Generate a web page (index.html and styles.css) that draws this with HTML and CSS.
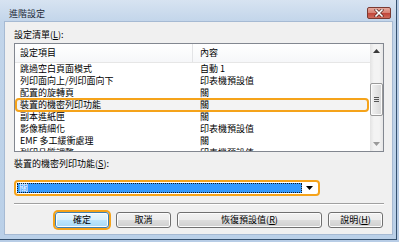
FILE: index.html
```html
<!DOCTYPE html>
<html>
<head>
<meta charset="utf-8">
<link rel="stylesheet" href="styles.css">
</head>
<body>
<div class="window">
  <div class="titlebar">
    <span class="title">進階設定</span>
    <span class="close"><svg width="10" height="8" viewBox="0 0 10 8"><path d="M2 1 L8 7 M8 1 L2 7" stroke="#5a2a24" stroke-width="3" stroke-linecap="square"/><path d="M2 1 L8 7 M8 1 L2 7" stroke="#fff" stroke-width="1.6" stroke-linecap="square"/></svg></span>
  </div>
  <div class="client">
    <div class="label">設定清單(<u>L</u>):</div>
    <div class="listbox">
      <div class="list">
        <div class="row head"><div class="c1">設定項目</div><div class="c2">內容</div></div>
        <div class="row"><div class="c1">跳過空白頁面模式</div><div class="c2">自動 1</div></div>
        <div class="row"><div class="c1">列印面向上/列印面向下</div><div class="c2">印表機預設值</div></div>
        <div class="row"><div class="c1">配置的旋轉頁</div><div class="c2">關</div></div>
        <div class="row sel"><div class="c1">裝置的機密列印功能</div><div class="c2">關</div></div>
        <div class="row"><div class="c1">副本進紙匣</div><div class="c2">關</div></div>
        <div class="row"><div class="c1">影像精細化</div><div class="c2">印表機預設值</div></div>
        <div class="row"><div class="c1">EMF 多工緩衝處理</div><div class="c2">關</div></div>
        <div class="row"><div class="c1">列印品質調整</div><div class="c2">印表機預設值</div></div>
      </div>
      <div class="scrollbar">
        <div class="arrow"><svg width="7" height="4" viewBox="0 0 7 4"><path d="M0 4 L3.5 0 L7 4 Z" fill="#3a3a3a"/></svg></div>
        <div class="track"><div class="thumb"><span class="grip"></span></div></div>
        <div class="arrow"><svg width="7" height="4" viewBox="0 0 7 4"><path d="M0 0 L3.5 4 L7 0 Z" fill="#9a9a9a"/></svg></div>
      </div>
    </div>
    <div class="label label2">裝置的機密列印功能(<u>S</u>):</div>
    <div class="combo">
      <div class="combo-val">關</div>
      <div class="combo-btn"><svg width="7" height="4" viewBox="0 0 7 4"><path d="M0 0 L3.5 4 L7 0 Z" fill="#000"/></svg></div>
    </div>
    <div class="sep"></div>
    <div class="buttons">
      <button class="btn default ok">確定</button>
      <button class="btn cancel">取消</button>
      <button class="btn reset">恢復預設值(<u>R</u>)</button>
      <button class="btn help">說明(<u>H</u>)</button>
    </div>
  </div>
</div>
</body>
</html>
```
FILE: styles.css
```css
body {
  margin: 0;
  background: #b8cde6;
  font-family: "Noto Sans CJK TC", "Noto Sans CJK SC", sans-serif;
  font-size: 9px;
  color: #000;
}
u { text-decoration: underline; text-underline-offset: 1px; }
.window {
  width: 396px;
  height: 239px;
  border-right: 1px solid #34506e;
  border-bottom: 1px solid #34506e;
  background: linear-gradient(#d7e3f1, #c2d5ea 22px, #bad0e8);
  display: flex;
  flex-direction: column;
}
.titlebar {
  height: 22px;
  display: flex;
  align-items: flex-start;
  padding: 0 5px 0 9px;
  flex: none;
}
.title {
  flex: 1;
  margin-top: 8px;
  line-height: 11px;
  color: #1e2a38;
}
.close {
  margin-top: 7px;
  width: 24px;
  height: 12px;
  box-sizing: border-box;
  border: 1px solid #7a3a32;
  border-radius: 2px;
  background: linear-gradient(#e6a89c, #d88476 45%, #c2473a 55%, #cf6b5c);
  display: flex;
  align-items: center;
  justify-content: center;
}
.close svg { display: block; }
.client {
  flex: 1;
  margin: 0 4px 5px 5px;
  background: #f0f0f0;
  display: flex;
  flex-direction: column;
  padding: 0 8px 0 9px;
  box-shadow: 0 0 0 1px #a6bad3;
}
.label {
  margin-top: 8px;
  height: 10px;
  line-height: 10px;
  white-space: nowrap;
}
.label2 { margin-top: 7px; }
.listbox {
  margin-top: 3px;
  height: 109px;
  box-sizing: border-box;
  border: 1px solid #828790;
  background: #fff;
  display: flex;
  flex: none;
}
.list {
  flex: 1;
  overflow: hidden;
}
.row {
  display: grid;
  grid-template-columns: 178px 1fr;
  height: 12px;
  line-height: 12px;
  white-space: nowrap;
}
.c1 { padding-left: 5px; overflow: hidden; }
.c2 { padding-left: 7px; }
.head {
  height: 19px;
  line-height: 17px;
  box-sizing: border-box;
  border-bottom: 1px solid #e6e6e6;
  background: linear-gradient(#ffffff, #f6f7f9);
}
.head .c1 { border-right: 1px solid #e3e4e6; box-sizing: border-box; }
.sel {
  position: relative;
  z-index: 1;
  height: 14px;
  margin: -1px 1px -1px 0;
  box-sizing: border-box;
  border: 2px solid #f5a31a;
  border-radius: 4px;
  background: #f3f3f3;
  line-height: 10px;
  grid-template-columns: 176px 1fr;
}
.sel .c1 { padding-left: 3px; }
.scrollbar {
  width: 13px;
  flex: none;
  display: flex;
  flex-direction: column;
  background: linear-gradient(90deg, #e3e3e3, #f3f3f3 30%, #f3f3f3 70%, #e6e6e6);
}
.arrow {
  height: 14px;
  display: flex;
  align-items: center;
  justify-content: center;
  flex: none;
}
.arrow svg { display: block; }
.track { flex: 1; }
.thumb {
  margin-top: 25px;
  height: 33px;
  box-sizing: border-box;
  border: 1px solid #999;
  border-radius: 2px;
  background: linear-gradient(90deg, #f2f2f2, #e4e4e4 50%, #d6d6d6);
  box-shadow: inset 0 0 0 1px #fbfbfb;
  display: flex;
  align-items: center;
  justify-content: center;
}
.grip {
  width: 5px;
  height: 5px;
  background: repeating-linear-gradient(#555 0 1px, transparent 1px 2px);
}
.combo {
  margin-top: 11px;
  width: 306px;
  height: 16px;
  box-sizing: border-box;
  border: 2px solid #f5a31a;
  border-radius: 4px;
  background: #fff;
  padding: 1px;
  display: flex;
  flex: none;
}
.combo-val {
  flex: 1;
  background: #3399ff;
  color: #fff;
  outline: 1px dotted #1a1a1a;
  outline-offset: -1px;
  padding-left: 2px;
  line-height: 10px;
}
.combo-btn {
  width: 15px;
  display: flex;
  align-items: center;
  justify-content: center;
}
.combo-btn svg { display: block; }
.sep {
  margin-top: 7px;
  height: 0;
  border-top: 1px solid #a0a0a0;
  border-bottom: 1px solid #ffffff;
  flex: none;
}
.buttons {
  margin-top: 7px;
  display: flex;
  height: 16px;
}
.btn {
  height: 16px;
  box-sizing: border-box;
  border: 1px solid #707070;
  border-radius: 3px;
  background: linear-gradient(#f2f2f2, #ebebeb 50%, #dddddd 50%, #cfcfcf);
  box-shadow: inset 0 0 0 1px #fcfcfc;
  font: inherit;
  color: #000;
  line-height: 12px;
  padding: 0;
  white-space: nowrap;
}
.default {
  border-color: #3c7fb1;
  background: linear-gradient(#eaf6fd, #d9f0fc 50%, #bee6fd 50%, #a7d9f5);
  box-shadow: inset 0 0 0 1px #fcfcfc, 0 0 0 2px #f5a31a;
}
.ok { margin-left: 41px; width: 54px; }
.cancel { margin-left: 7px; width: 55px; }
.reset { margin-left: 6px; width: 145px; }
.help { margin-left: 6px; width: 55px; }
```
